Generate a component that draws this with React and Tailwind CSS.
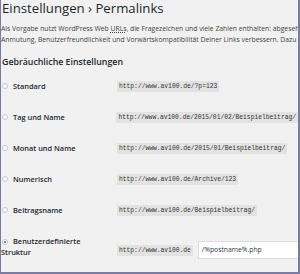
import React from "react";

const rows = [
  { label: "Standard", url: "http://www.av100.de/?p=123" },
  { label: "Tag und Name", url: "http://www.av100.de/2015/01/02/Beispielbeitrag/" },
  { label: "Monat und Name", url: "http://www.av100.de/2015/01/Beispielbeitrag/" },
  { label: "Numerisch", url: "http://www.av100.de/Archive/123" },
  { label: "Beitragsname", url: "http://www.av100.de/Beispielbeitrag/" },
];

const Radio = ({ checked }) => (
  <span className="inline-flex items-center justify-center w-[6px] h-[6px] rounded-full border border-[#c3c6ca] bg-white align-middle shrink-0">
    {checked && <span className="w-[2px] h-[2px] rounded-full bg-[#555]" />}
  </span>
);

const Code = ({ children }) => (
  <code className="inline-block bg-[#e3e3e3] text-[#333] px-[2px] py-[2px] text-[6.3px] leading-[7px] font-['Liberation_Mono',monospace] whitespace-nowrap">
    {children}
  </code>
);

export default function App() {
  return (
    <div className="w-[300px] h-[274px] overflow-hidden bg-[#f1f1f1] border-l border-r-2 border-b-2 border-[#7b7ba6] font-['Open_Sans',sans-serif] text-[#23282d]">
      <h1 className="pl-[1px] text-[13.2px] leading-[16px] font-normal whitespace-nowrap">
        Einstellungen › Permalinks
      </h1>
      <div className="mt-[7px] text-[6.8px] leading-[11px] text-[#444] whitespace-nowrap">
        <p>
          Als Vorgabe nutzt WordPress Web <abbr className="underline decoration-dotted">URLs</abbr>, die Fragezeichen und viele Zahlen enthalten: abgesehen davon bietet WordPress dir aber auch die Möglichkeit, eine individuelle URL-Struktur anzulegen. Das kann die Ästhetik,
        </p>
        <p>
          Anmutung, Benutzerfreundlichkeit und Vorwärtskompatibilität Deiner Links verbessern. Dazu gibt es einige Tags, die du verwenden kannst.
        </p>
      </div>
      <h3 className="mt-[11px] pl-[1px] text-[8.8px] leading-[12px] font-semibold whitespace-nowrap">
        Gebräuchliche Einstellungen
      </h3>
      <div className="mt-[3px]">
        {rows.map((row) => (
          <div key={row.label} className="flex items-center h-[31px]">
            <div className="w-[116px] flex items-center gap-[5px] pl-[1px] text-[7.4px] font-semibold">
              <Radio />
              <span>{row.label}</span>
            </div>
            <Code>{row.url}</Code>
          </div>
        ))}
        <div className="flex items-start">
          <div className="w-[116px] shrink-0 pt-[10px] pr-[30px] text-[7.4px] leading-[11px] font-semibold">
            <span className="pl-[1px] pr-[5px]">
              <Radio checked />
            </span>
            Benutzerdefinierte Struktur
          </div>
          <div className="flex items-center mt-[15px] gap-[5px]">
            <Code>http://www.av100.de</Code>
            <div className="w-[110px] h-[18px] bg-white border border-[#ddd] pl-[3px] flex items-center text-[6.8px] text-[#32373c] whitespace-nowrap">
              /%postname%.php
            </div>
          </div>
        </div>
      </div>
    </div>
  );
}
